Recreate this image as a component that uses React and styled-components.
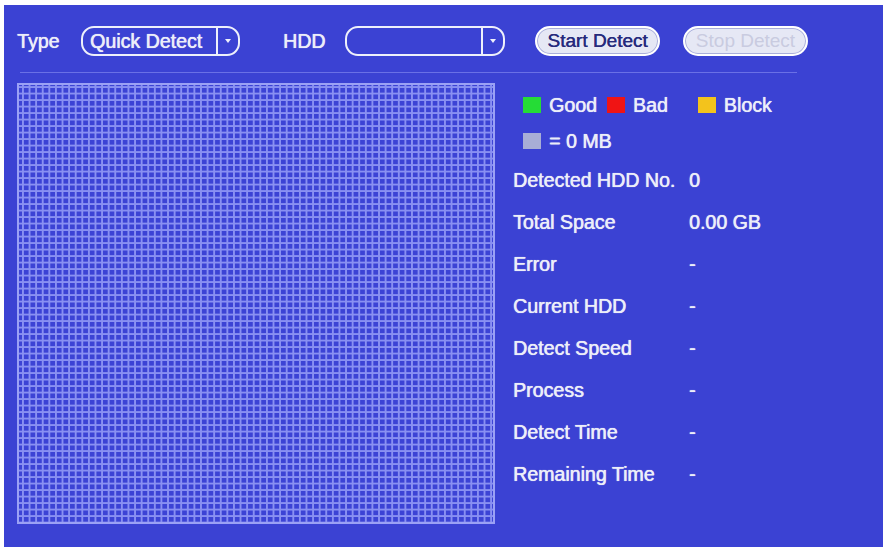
import React from "react"
import styled, { createGlobalStyle } from "styled-components"

const GlobalStyle = createGlobalStyle`
  html, body {
    margin: 0;
    padding: 0;
    background: #ffffff;
  }
  body {
    font-family: "Liberation Sans", Arial, sans-serif;
  }
`

const Screen = styled.div`
  width: 887px;
  height: 550px;
  padding: 5px 4px 3px 4px;
  box-sizing: border-box;
  background: #ffffff;
`

const Panel = styled.div`
  height: 542px;
  width: 879px;
  background: #3b42d3;
  padding: 21px 0 0 13px;
  box-sizing: border-box;
  display: flex;
  flex-direction: column;
  color: #eceef9;
  font-size: 19.6px;
  font-weight: normal;
  text-shadow: 0 0 1px rgba(255, 255, 255, 0.7), 0.4px 0 0 rgba(236, 238, 249, 0.8);
`

const Toolbar = styled.div`
  display: flex;
  align-items: center;
  height: 30px;
`

const Label = styled.span`
  width: ${(p) => p.$width}px;
  white-space: nowrap;
`

const Select = styled.div`
  width: ${(p) => p.$width}px;
  height: 30px;
  box-sizing: border-box;
  border: 2px solid #eef0fb;
  border-radius: 13px;
  display: flex;
  align-items: stretch;
  margin-right: ${(p) => p.$after}px;
`

const SelectValue = styled.div`
  flex: 1;
  display: flex;
  align-items: center;
  padding-left: 7px;
  white-space: nowrap;
`

const SelectArrow = styled.div`
  width: 20px;
  border-left: 2px solid #eef0fb;
  display: flex;
  align-items: center;
  justify-content: center;
`

const Button = styled.div`
  width: 125px;
  height: 30px;
  box-sizing: border-box;
  border: 2px solid #ffffff;
  border-radius: 15px;
  background: #e6e8f5;
  box-shadow: inset 0 0 0 1px #a9aedb;
  display: flex;
  align-items: center;
  justify-content: center;
  font-size: 19px;
  color: ${(p) => (p.$disabled ? "#c9cbe0" : "#262a7c")};
  text-shadow: ${(p) => (p.$disabled ? "none" : "0.4px 0 0 #262a7c")};
  margin-right: ${(p) => p.$after || 0}px;
  white-space: nowrap;
`

const Separator = styled.div`
  height: 1px;
  width: 777px;
  margin: 16px 0 10px 3px;
  background: #6a70e6;
`

const Body = styled.div`
  display: flex;
  gap: 18px;
`

const BlockMap = styled.div`
  width: 478px;
  height: 441px;
  box-sizing: border-box;
  border: 2px solid #9ba1f5;
  background-color: #3c43d5;
  background-image:
    linear-gradient(90deg, #8990f2 1.5px, transparent 1.5px),
    linear-gradient(0deg, #8990f2 1.5px, transparent 1.5px);
  background-size: 6.6px 6.5px;
  background-position: 3px 3px;
`

const Info = styled.div`
  display: flex;
  flex-direction: column;
  padding-top: 4px;
`

const LegendRow = styled.div`
  display: flex;
  align-items: center;
  height: 36px;
  padding-left: 10px;
`

const LegendItem = styled.div`
  display: flex;
  align-items: center;
  gap: 8px;
  margin-right: ${(p) => p.$after || 0}px;
`

const Swatch = styled.span`
  width: 18px;
  height: 16px;
  background: ${(p) => p.$color};
`

const InfoRow = styled.div`
  display: flex;
  align-items: center;
  height: 42px;
`

const InfoLabel = styled.span`
  width: 176px;
  white-space: nowrap;
`

const InfoValue = styled.span`
  white-space: nowrap;
`

const Arrow = () => (
  <svg width="10" height="8" viewBox="0 0 10 8">
    <path d="M2 2 L5 6 L8 2 Z" fill="#eef0fb" />
  </svg>
)

const rows = [
  ["Detected HDD No.", "0"],
  ["Total Space", "0.00 GB"],
  ["Error", "-"],
  ["Current HDD", "-"],
  ["Detect Speed", "-"],
  ["Process", "-"],
  ["Detect Time", "-"],
  ["Remaining Time", "-"],
]

export default function App() {
  return (
    <Screen>
      <GlobalStyle />
      <Panel>
        <Toolbar>
          <Label $width={64}>Type</Label>
          <Select $width={159} $after={43}>
            <SelectValue>Quick Detect</SelectValue>
            <SelectArrow>
              <Arrow />
            </SelectArrow>
          </Select>
          <Label $width={62}>HDD</Label>
          <Select $width={160} $after={30}>
            <SelectValue />
            <SelectArrow>
              <Arrow />
            </SelectArrow>
          </Select>
          <Button $after={23}>Start Detect</Button>
          <Button $disabled>Stop Detect</Button>
        </Toolbar>
        <Separator />
        <Body>
          <BlockMap />
          <Info>
            <LegendRow>
              <LegendItem $after={10}>
                <Swatch $color="#25dc36" />
                Good
              </LegendItem>
              <LegendItem $after={30}>
                <Swatch $color="#f01414" />
                Bad
              </LegendItem>
              <LegendItem>
                <Swatch $color="#f3c31c" />
                Block
              </LegendItem>
            </LegendRow>
            <LegendRow>
              <LegendItem>
                <Swatch $color="#a8aed6" />
                = 0 MB
              </LegendItem>
            </LegendRow>
            {rows.map(([label, value]) => (
              <InfoRow key={label}>
                <InfoLabel>{label}</InfoLabel>
                <InfoValue>{value}</InfoValue>
              </InfoRow>
            ))}
          </Info>
        </Body>
      </Panel>
    </Screen>
  )
}
